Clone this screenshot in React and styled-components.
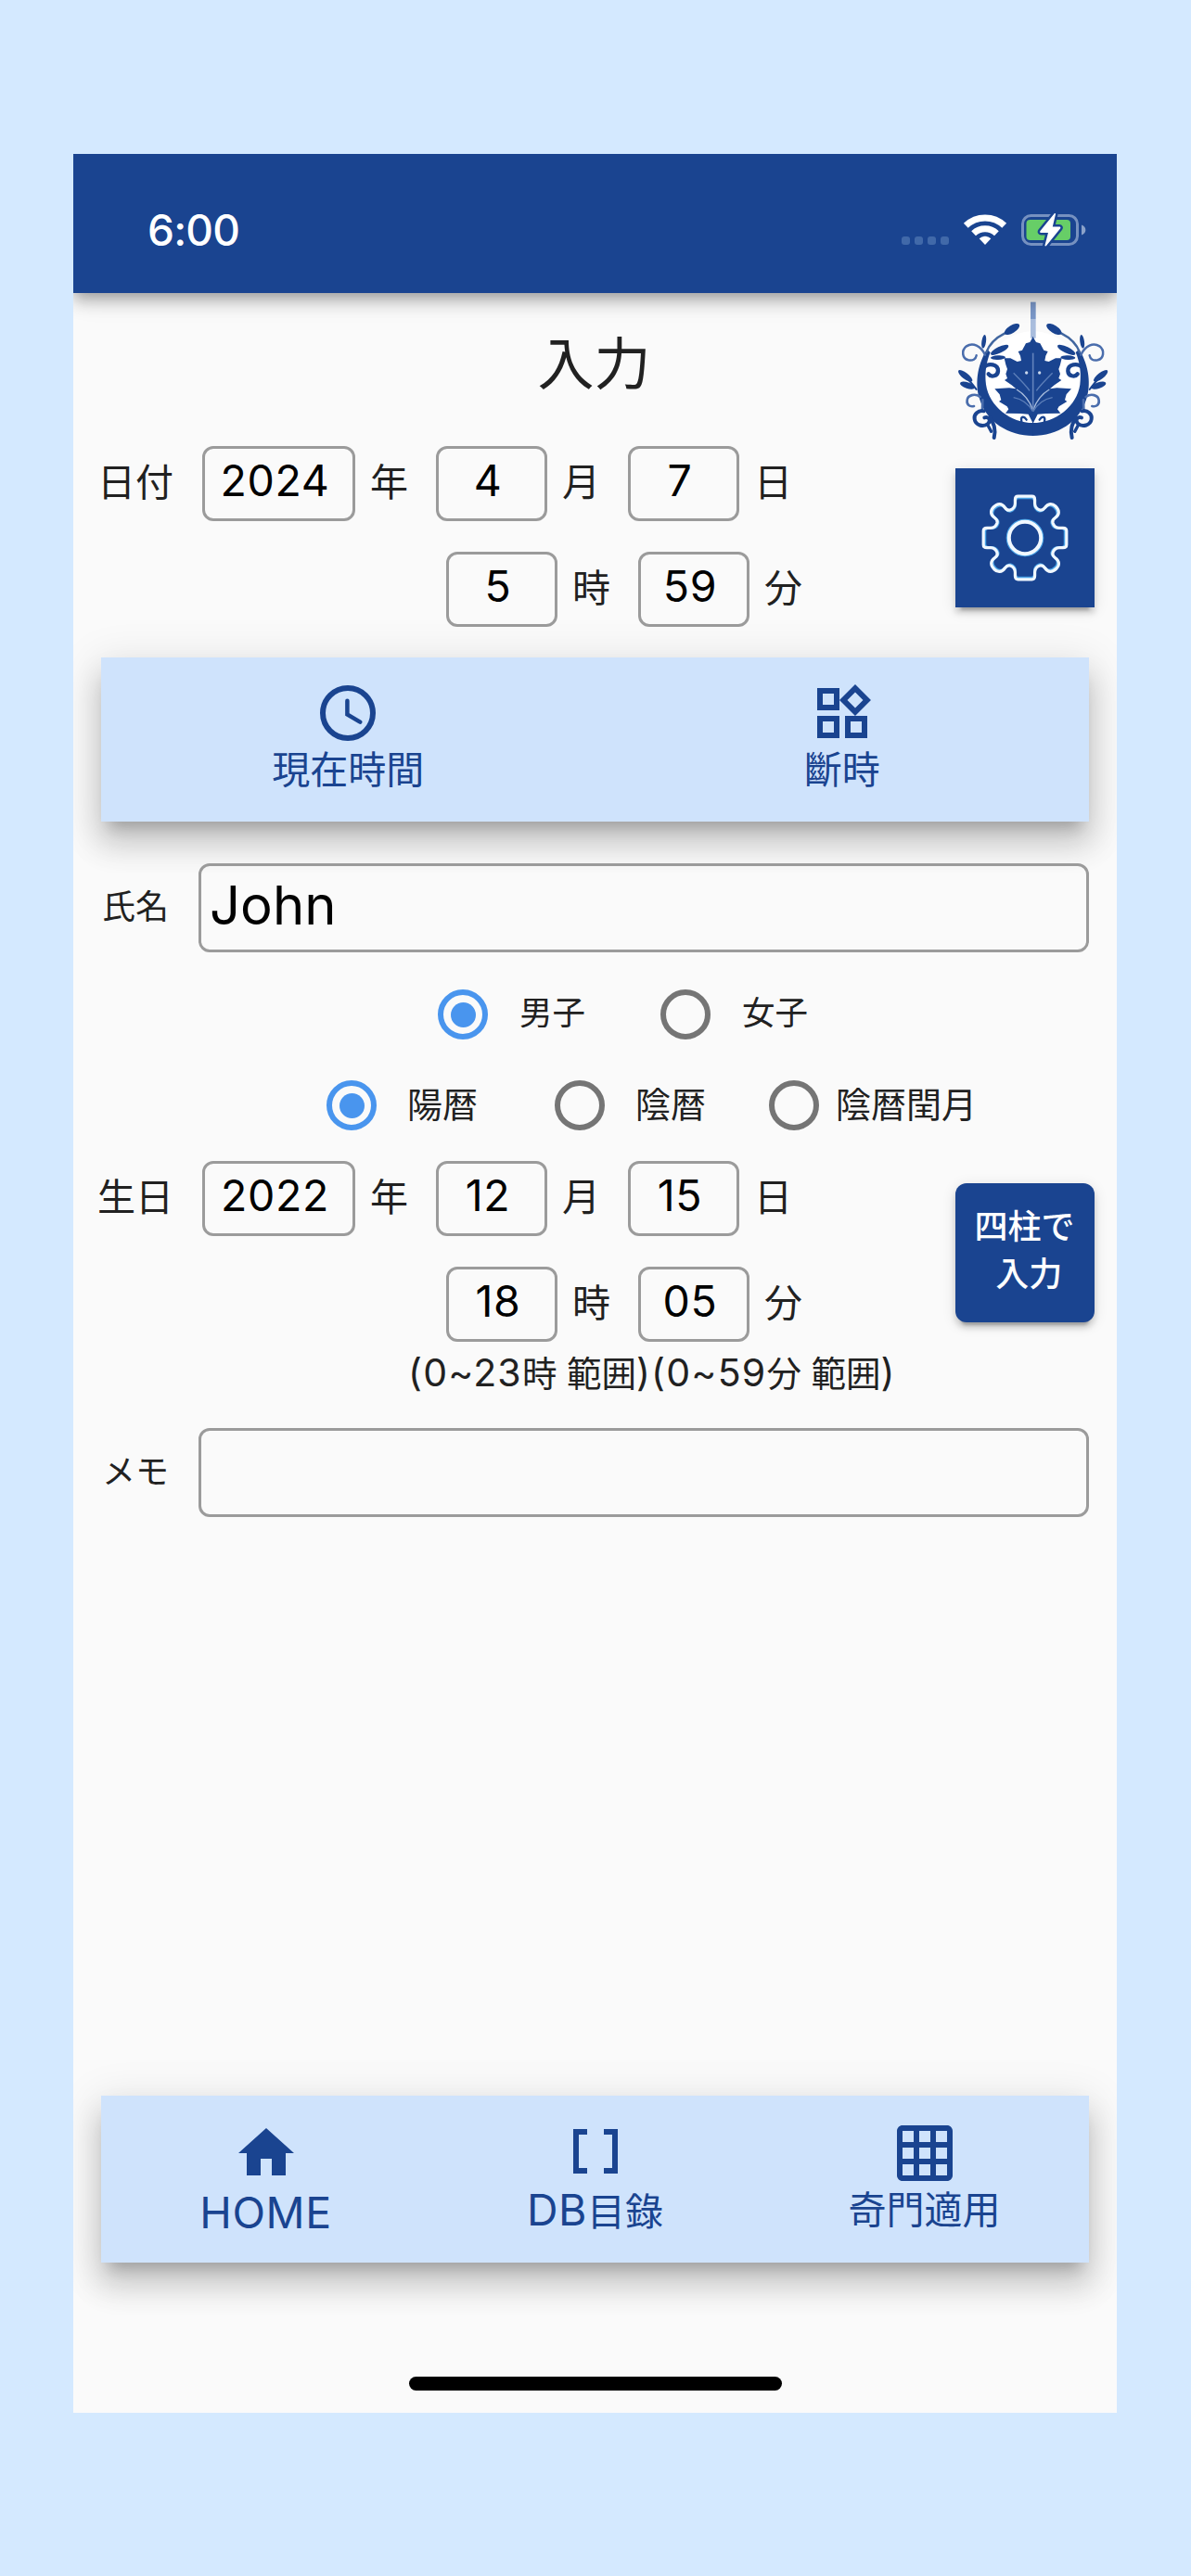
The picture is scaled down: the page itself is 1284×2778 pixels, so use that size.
/**
 * Input screen: consultation date, subject details and the bottom navigation.
 */
import React, { useState } from 'react';
import styled, { createGlobalStyle } from 'styled-components';
import { MdOutlineWidgets, MdHome, MdDataArray, MdGridOn } from 'react-icons/md';

const colors = {
  page: '#d4e9ff',
  surface: '#fafafa',
  primary: '#1a4490',
  panel: '#cfe3fc',
  border: '#9b9b9b',
  text: '#212121',
  radio: '#4995ee',
  radioOff: '#757575',
};

const shadows = {
  sm: '0 9px 3px -6px rgba(0,0,0,0.2), 0 6px 6px rgba(0,0,0,0.14), 0 3px 15px rgba(0,0,0,0.12)',
  md: '0 6px 12px -3px rgba(0,0,0,0.2), 0 12px 15px rgba(0,0,0,0.14), 0 3px 30px rgba(0,0,0,0.12)',
  lg: '0 15px 15px -9px rgba(0,0,0,0.2), 0 24px 30px 3px rgba(0,0,0,0.14), 0 9px 42px 6px rgba(0,0,0,0.1)',
};

const GlobalStyle = createGlobalStyle`
  * { box-sizing: border-box; }
  body {
    margin: 0;
    background: ${colors.page};
    font-family: Inter, "Noto Sans CJK JP", sans-serif;
    color: ${colors.text};
  }
`;

const Page = styled.div`
  height: 2778px;
  padding: 166px 80px 176px 79px;
`;

const Phone = styled.div`
  display: flex;
  flex-direction: column;
  height: 2436px;
  background: ${colors.surface};
  overflow: hidden;
`;

const StatusBar = styled.header`
  position: relative;
  z-index: 1;
  display: flex;
  align-items: center;
  justify-content: space-between;
  flex-shrink: 0;
  height: 150px;
  padding: 14px 33px 0 80px;
  background: ${colors.primary};
  box-shadow: ${shadows.md};
`;

const Clock = styled.span`
  font-size: 46px;
  font-weight: 550;
  letter-spacing: -0.8px;
  line-height: 60px;
  color: #fff;
`;

const StatusIcons = styled.div`
  display: flex;
  align-items: center;
  height: 38px;
`;

const Body = styled.main`
  display: flex;
  flex-direction: column;
  flex: 1;
  padding-bottom: 24px;
`;

const Section = styled.section`
  display: flex;
`;

const FieldColumn = styled.div`
  width: 942px;
`;

const SideColumn = styled.div`
  display: flex;
  flex-direction: column;
  align-items: flex-start;
  padding: ${({ $top }) => $top}px 0 0 9px;
`;

const Title = styled.h1`
  margin: 0;
  height: 165px;
  padding: 35px 0 0 181px;
  font-size: 61px;
  font-weight: 400;
  line-height: 84px;
  text-align: center;
`;

const FieldRow = styled.div`
  display: flex;
  align-items: center;
  height: 81px;
  margin-bottom: 33px;
  padding-left: ${({ $indent }) => ($indent ? 402 : 26)}px;
`;

const RowLabel = styled.span`
  width: 113px;
  font-size: 41px;
  line-height: 60px;
  padding-bottom: 3px;
`;

const Unit = styled.span`
  width: 87px;
  padding: 0 0 3px 16px;
  font-size: 41px;
  line-height: 60px;
`;

const NumberInput = styled.input`
  width: ${({ $wide }) => ($wide ? 165 : 120)}px;
  height: 81px;
  padding: 0 8px 7px 0;
  border: 3px solid ${colors.border};
  border-radius: 12px;
  background: transparent;
  font: 400 46.5px Inter, sans-serif;
  letter-spacing: 0.6px;
  text-align: center;
  color: #000;
  outline: none;
`;

const LogoSlot = styled.div`
  height: 181px;
`;

const SideButton = styled.button`
  display: flex;
  align-items: center;
  justify-content: center;
  width: 150px;
  height: 150px;
  padding: 0 1px ${({ $rounded }) => ($rounded ? 4 : 0)}px 0;
  border: 0;
  border-radius: ${({ $rounded }) => ($rounded ? 12 : 0)}px;
  background: ${colors.primary};
  box-shadow: ${shadows.sm};
  color: #fff;
  font: 500 36px/51px Inter, "Noto Sans CJK JP", sans-serif;
  white-space: pre;
`;

const Panel = styled.nav`
  display: grid;
  grid-template-columns: repeat(${({ $columns }) => $columns}, 1fr);
  flex-shrink: 0;
  height: ${({ $height }) => $height}px;
  margin: 0 30px;
  background: ${colors.panel};
  box-shadow: ${shadows.lg};
`;

const PanelItem = styled.div`
  display: flex;
  flex-direction: column;
  align-items: center;
  gap: ${({ $gap }) => $gap || 0}px;
  padding-top: ${({ $top }) => $top}px;
  color: ${colors.primary};
  font-size: 41px;
  line-height: 50px;

  svg { display: block; flex-shrink: 0; }
`;

const Latin = styled.span`
  font-size: ${({ $size }) => $size}px;
  letter-spacing: ${({ $spacing }) => $spacing || 0.6}px;
`;

const TextRow = styled.div`
  display: flex;
  align-items: center;
  flex-shrink: 0;
  height: 96px;
  padding: 0 30px 0 31px;
`;

const TextLabel = styled.span`
  width: 104px;
  font-size: 36px;
  line-height: 54px;
  padding-bottom: 3px;
`;

const TextInput = styled.input`
  flex: 1;
  height: 96px;
  padding: 0 9px 6px;
  border: 3px solid ${colors.border};
  border-radius: 12px;
  background: transparent;
  font: 400 58px Inter, sans-serif;
  color: #000;
  outline: none;
`;

const RadioRow = styled.div`
  display: flex;
  align-items: center;
  height: 98px;
  padding-left: ${({ $left }) => $left}px;
`;

const RadioOption = styled.div`
  display: flex;
  align-items: center;
  gap: ${({ $gap }) => $gap}px;
  width: ${({ $width }) => $width}px;
  font-size: ${({ $size }) => $size}px;
  line-height: 54px;
  white-space: nowrap;
  cursor: pointer;
`;

const RadioCircle = styled.span`
  display: flex;
  align-items: center;
  justify-content: center;
  flex-shrink: 0;
  width: 54px;
  height: 54px;
  border: 6px solid ${({ $on }) => ($on ? colors.radio : colors.radioOff)};
  border-radius: 50%;

  &::after {
    content: '';
    width: 27px;
    height: 27px;
    border-radius: 50%;
    background: ${({ $on }) => ($on ? colors.radio : 'transparent')};
  }
`;

const RadioText = styled.span`
  padding-bottom: 2px;
`;

const Hint = styled.p`
  margin: -30px 0 0;
  padding-left: 361px;
  height: 60px;
  font-size: 37.5px;
  line-height: 60px;
  white-space: nowrap;
`;

const Spacer = styled.div`
  flex: 1;
`;

const Gap = styled.div`
  flex-shrink: 0;
  height: ${({ $size }) => $size}px;
`;

const HomeIndicator = styled.div`
  align-self: center;
  flex-shrink: 0;
  width: 402px;
  height: 15px;
  margin-top: 123px;
  border-radius: 8px;
  background: #000;
`;

const StatusGlyphs = () => (
  <svg width="200" height="38" viewBox="971 229 200 38">
    {[972, 986, 1000, 1014].map((x) => (
      <rect key={x} x={x} y="255" width="9" height="9" rx="3" fill="#4169a9" />
    ))}
    <g fill="none" stroke="#fff" strokeWidth="7">
      <path d="M1041.3 243.3a30 30 0 0 1 41.4 0" />
      <path d="M1049.6 251.7a18.2 18.2 0 0 1 24.8 0" />
    </g>
    <path d="M1062 264l-6.3-6.8a9 9 0 0 1 12.6 0z" fill="#fff" />
    <rect x="1102.5" y="232.5" width="59" height="31" rx="9" fill="none" stroke="#7691c0" strokeWidth="3" />
    <path d="M1166 242.5c5.8 1.8 5.8 9.2 0 11z" fill="#8ba2c9" />
    <rect x="1106.5" y="237" width="47.5" height="22" rx="4" fill="#67ce67" />
    <path
      d="M1136.5 230.5l-15 18.5c-.7 1-.3 2 1 2h7.5l-3.5 13.5c-.3 1 .8 1.4 1.5.6l15-18.6c.8-1 .3-2-1-2h-7.2l3.2-13.4c.2-1-.8-1.5-1.5-.6z"
      fill="#fff"
      stroke={colors.primary}
      strokeWidth="5"
      paintOrder="stroke"
    />
  </svg>
);

const ClockIcon = () => (
  <svg width="72" height="72" viewBox="0 0 24 24" fill="none" stroke="currentColor">
    <circle cx="12" cy="12" r="9" strokeWidth="2" />
    <path d="M11.8 7.6v4.9l4.6 2.7" strokeWidth="1.5" strokeLinecap="round" />
  </svg>
);

const GEAR_QUARTER =
  'M0-44.8H7.5C10-44.8 10.6-43.5 10.6-41V-37C10.8-33 13-31 16-30C18.5-29.3 20-30.5 21.5-32.5C25-37.5 29.5-37.5 33-34C37.5-29.5 37.5-25 32.5-21.5C30-19.8 29.3-18.5 30-16C31-13 33-10.8 37-10.6H41C43.5-10.6 44.8-10 44.8-7.5V0';

const GearIcon = () => (
  <svg width="96" height="96" viewBox="-48 -48 96 96" fill="none">
    <g stroke="#4aa3e6" strokeWidth="2.6">
      {[0, 90, 180, 270].map((a) => (
        <path key={a} d={GEAR_QUARTER} transform={`rotate(${a}) scale(0.96)`} />
      ))}
      <circle r="19" />
    </g>
    <g stroke="#f1f8ff" strokeWidth="3.2">
      {[0, 90, 180, 270].map((a) => (
        <path key={a} d={GEAR_QUARTER} transform={`rotate(${a})`} />
      ))}
      <circle r="17.2" strokeWidth="4" />
    </g>
  </svg>
);

const LogoHalf = () => (
  <g>
    {/* ring */}
    <path
      fill={colors.primary}
      d="M192 228C158 282 154 345 168 388C190 463 262 508 342 508V466C268 466 199 412 189 342C184 305 190 268 203 238Z"
    />
    {/* leaf */}
    <path
      fill={colors.primary}
      d="M342 186L331 205L318 209L306 231L293 235L300 249L303 265L290 268L268 257L248 257L253 278L258 292L253 308L258 322L249 328L272 344L286 356L264 353L217 356L233 374L238 392L231 397L257 413L262 422L252 435L300 436L326 438L342 470Z"
    />
    {/* vines */}
    <g fill="none" stroke={colors.primary} strokeLinecap="round">
      <path d="M190 238C200 210 222 190 250 176" strokeWidth="7" stroke="#41669f" />
      <path d="M186 246C172 216 146 205 126 218C108 232 112 258 132 263C146 266 156 260 158 248" strokeWidth="7.5" stroke="#4a6dac" />
      <path d="M182 286C198 271 228 276 228 298C227 315 206 320 197 308" strokeWidth="13" />
      <path d="M170 382C154 370 130 375 128 393C126 408 136 415 150 412" strokeWidth="8" stroke="#4a6dac" />
      <path d="M178 392L177 425" strokeWidth="8" stroke="#4a6dac" />
      <path d="M182 428C164 424 149 438 152 454C155 474 180 481 195 469C207 458 198 445 184 449" strokeWidth="12" />
      <path d="M202 448C214 470 222 486 215 514" strokeWidth="12" />
      <path d="M194 472L206 494" strokeWidth="10" />
      <path d="M304 462C300 446 310 442 320 456" strokeWidth="7" />
      <path d="M158 358C148 345 140 334 128 322" strokeWidth="6" />
    </g>
    <g fill={colors.primary}>
      <ellipse cx="273" cy="163" rx="28" ry="12" transform="rotate(-32 273 163)" />
      <ellipse cx="182" cy="203" rx="7" ry="22" transform="rotate(8 182 203)" />
      <ellipse cx="233" cy="230" rx="32" ry="10" transform="rotate(-26 233 230)" />
      <ellipse cx="228" cy="255" rx="24" ry="7" transform="rotate(-3 228 255)" />
      <ellipse cx="122" cy="314" rx="28" ry="10" transform="rotate(38 122 314)" />
      <ellipse cx="129" cy="345" rx="25" ry="10" transform="rotate(18 129 345)" />
    </g>
    {/* veins */}
    <g fill="none" stroke="#5d7fb9" strokeWidth="4">
      <path d="M341 425C330 395 312 372 288 358" stroke="#a9bddd" />
      <path d="M330 362C318 345 298 325 278 305" />
      <path d="M341 430C325 402 300 388 278 384" />
    </g>
    <circle cx="320" cy="304" r="5" fill="#c9d7ec" />
  </g>
);

const Logo = () => (
  <svg width="167" height="152" viewBox="90 70 501 456">
    <circle cx="341" cy="325" r="155" fill="#fff" />
    <rect x="333" y="75" width="17" height="55" fill="#7b98c9" />
    <rect x="333" y="130" width="17" height="62" fill="#a9bddd" />
    <LogoHalf />
    <g transform="translate(682 0) scale(-1 1)">
      <LogoHalf />
    </g>
    <path d="M341 240V425" stroke="#6181ba" strokeWidth="5" />
  </svg>
);

const DateFields = ({ label, year, month, day, hour, minute }) => (
  <>
    <FieldRow>
      <RowLabel>{label}</RowLabel>
      <NumberInput $wide defaultValue={year} />
      <Unit>年</Unit>
      <NumberInput defaultValue={month} />
      <Unit>月</Unit>
      <NumberInput defaultValue={day} />
      <Unit>日</Unit>
    </FieldRow>
    <FieldRow $indent>
      <NumberInput defaultValue={hour} />
      <Unit>時</Unit>
      <NumberInput defaultValue={minute} />
      <Unit>分</Unit>
    </FieldRow>
  </>
);

const genders = [
  { label: '男子', width: 240, gap: 34 },
  { label: '女子', width: 240, gap: 34 },
];

const calendars = [
  { label: '陽暦', width: 246, gap: 33 },
  { label: '陰暦', width: 231, gap: 33 },
  { label: '陰暦閏月', width: 231, gap: 18 },
];

const RadioGroup = ({ options, value, onChange, left, size }) => (
  <RadioRow $left={left}>
    {options.map((o) => (
      <RadioOption key={o.label} $width={o.width} $gap={o.gap} $size={size} onClick={() => onChange(o.label)}>
        <RadioCircle $on={o.label === value} />
        <RadioText>{o.label}</RadioText>
      </RadioOption>
    ))}
  </RadioRow>
);

export default function App() {
  const [gender, setGender] = useState('男子');
  const [calendar, setCalendar] = useState('陽暦');

  return (
    <Page>
      <GlobalStyle />
      <Phone>
        <StatusBar>
          <Clock>6:00</Clock>
          <StatusIcons>
            <StatusGlyphs />
          </StatusIcons>
        </StatusBar>

        <Body>
          <Section>
            <FieldColumn>
              <Title>入力</Title>
              <DateFields label="日付" year="2024" month="4" day="7" hour="5" minute="59" />
            </FieldColumn>
            <SideColumn $top={8}>
              <LogoSlot>
                <Logo />
              </LogoSlot>
              <SideButton>
                <GearIcon />
              </SideButton>
            </SideColumn>
          </Section>

          <Panel $columns={2} $height={177}>
            <PanelItem $top={24}>
              <ClockIcon />
              現在時間
            </PanelItem>
            <PanelItem $top={24}>
              <MdOutlineWidgets size={72} />
              斷時
            </PanelItem>
          </Panel>

          <Gap $size={45} />
          <TextRow>
            <TextLabel>氏名</TextLabel>
            <TextInput defaultValue="John" />
          </TextRow>

          <Gap $size={18} />
          <RadioGroup options={genders} value={gender} onChange={setGender} left={393} size={35.5} />
          <RadioGroup options={calendars} value={calendar} onChange={setCalendar} left={273} size={38} />
          <Gap $size={11} />

          <Section>
            <FieldColumn>
              <DateFields label="生日" year="2022" month="12" day="15" hour="18" minute="05" />
              <Hint>
                <Latin $size={41} $spacing={1.2}>(0~23</Latin>時 範囲
                <Latin $size={41} $spacing={1.2}>)(0~59</Latin>分 範囲
                <Latin $size={41}>)</Latin>
              </Hint>
            </FieldColumn>
            <SideColumn $top={24}>
              <SideButton $rounded>{'四柱で\n 入力'}</SideButton>
            </SideColumn>
          </Section>

          <Gap $size={30} />
          <TextRow>
            <TextLabel>メモ</TextLabel>
            <TextInput />
          </TextRow>

          <Spacer />
          <Panel $columns={3} $height={180}>
            <PanelItem $top={26} $gap={3}>
              <MdHome size={72} />
              <Latin $size={46.5}>HOME</Latin>
            </PanelItem>
            <PanelItem $top={24} $gap={2}>
              <MdDataArray size={72} />
              <span><Latin $size={46.5}>DB</Latin>目錄</span>
            </PanelItem>
            <PanelItem $top={26}>
              <MdGridOn size={72} />
              奇門適用
            </PanelItem>
          </Panel>
          <HomeIndicator />
        </Body>
      </Phone>
    </Page>
  );
}
